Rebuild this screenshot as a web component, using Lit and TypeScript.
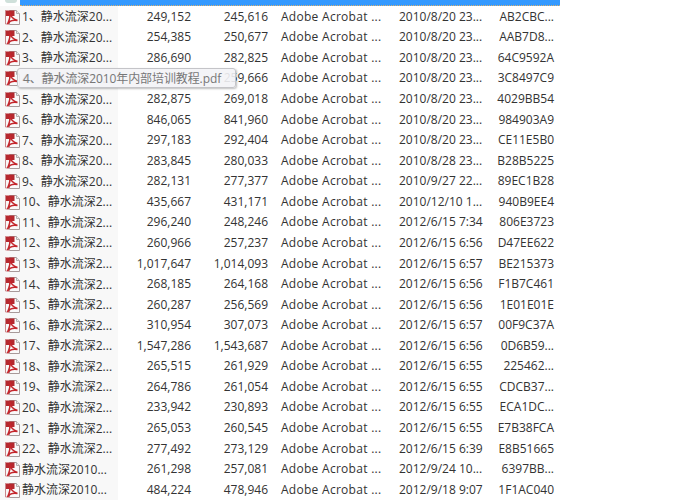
import { LitElement, html, css, svg } from "lit";
import { customElement } from "lit/decorators.js";

const rows: string[][] = [
["1、静水流深20...","249,152","245,616","2010/8/20 23...","AB2CBC..."],
["2、静水流深20...","254,385","250,677","2010/8/20 23...","AAB7D8..."],
["3、静水流深20...","286,690","282,825","2010/8/20 23...","64C9592A"],
["4、静水流深20...","","259,666","2010/8/20 23...","3C8497C9"],
["5、静水流深20...","282,875","269,018","2010/8/20 23...","4029BB54"],
["6、静水流深20...","846,065","841,960","2010/8/20 23...","984903A9"],
["7、静水流深20...","297,183","292,404","2010/8/20 23...","CE11E5B0"],
["8、静水流深20...","283,845","280,033","2010/8/28 23...","B28B5225"],
["9、静水流深20...","282,131","277,377","2010/9/27 22...","89EC1B28"],
["10、静水流深2...","435,667","431,171","2010/12/10 1...","940B9EE4"],
["11、静水流深2...","296,240","248,246","2012/6/15 7:34","806E3723"],
["12、静水流深2...","260,966","257,237","2012/6/15 6:56","D47EE622"],
["13、静水流深2...","1,017,647","1,014,093","2012/6/15 6:57","BE215373"],
["14、静水流深2...","268,185","264,168","2012/6/15 6:56","F1B7C461"],
["15、静水流深2...","260,287","256,569","2012/6/15 6:56","1E01E01E"],
["16、静水流深2...","310,954","307,073","2012/6/15 6:57","00F9C37A"],
["17、静水流深2...","1,547,286","1,543,687","2012/6/15 6:56","0D6B59..."],
["18、静水流深2...","265,515","261,929","2012/6/15 6:55","225462..."],
["19、静水流深2...","264,786","261,054","2012/6/15 6:55","CDCB37..."],
["20、静水流深2...","233,942","230,893","2012/6/15 6:55","ECA1DC..."],
["21、静水流深2...","265,053","260,545","2012/6/15 6:55","E7B38FCA"],
["22、静水流深2...","277,492","273,129","2012/6/15 6:39","E8B51665"],
["静水流深2010...","261,298","257,081","2012/9/24 10...","6397BB..."],
["静水流深2010...","484,224","478,946","2012/9/18 9:07","1F1AC040"],
];

const icon = svg`<svg class="ic" width="17" height="17" viewBox="0 -1 17 17"><path d="M5.500 1.500h7l3 3v11h-10z" fill="#fafafa" stroke="#a89a9a"/><path d="M12.500 1.500v3h3" fill="#ececec" stroke="#b5b0b0"/><path d="M1 1.500h9.500v5.500H1z" fill="#b5282e"/><path d="M1.500 2v13h4" fill="none" stroke="#c9868a"/><path d="M6 3c.2 3.500 1.500 6.500 7.500 8.500-4-.8-7.500-.3-10 3.500 2-4 3-7.500 2.500-12" fill="none" stroke="#c4262c" stroke-width="1.500"/></svg>`;

@customElement("app-root")
export class AppRoot extends LitElement {
  static styles = css`
    :host { display: block; width: 700px; height: 504px; overflow: hidden; background: #fff;
      font-family: "Open Sans", "Noto Sans CJK SC", sans-serif; font-size: 12px; color: #333; position: relative; }
    .top { height: 6px; width: 560px; display: flex; }
    .top i { display: block; width: 20px; }
    .top i::before { content: ""; display: block; width: 12px; height: 3px; margin-left: 5px; background: #cfe0da; border-radius: 0 0 6px 6px; }
    .top b { display: block; flex: 1; box-sizing: border-box; background: #3399ff; border-bottom: 1px dotted #d8b070; }
    .list { width: 560px; display: flex; flex-direction: column; }
    .row { display: grid; grid-template-columns: 118px 73px 77px 131px 86px 75px; height: 20.57px; align-items: center; white-space: nowrap; }
    .name { display: flex; align-items: center; background: #f8f8f8; height: 100%; padding-left: 4px; gap: 1px; }
    .ic { flex: none; }
    .num { text-align: right; }
    .type { padding-left: 13px; letter-spacing: .28px; }
    .crc { text-align: right; padding-right: 6px; }
    .tip { position: absolute; left: 17px; top: 68px; height: 20px; width: 219px; box-sizing: border-box; background: rgba(243,243,246,.9); border: 1px solid #c4c4c8; border-radius: 3px;
      color: #777; display: flex; align-items: center; padding-left: 5px; letter-spacing: -.1px; box-shadow: 1px 1px 2px rgba(0,0,0,.25); }
  `;
  render() {
    return html`<div class="top"><i></i><b></b></div><div class="list">
      ${rows.map(r => html`<div class="row">
        <div class="name">${icon}<span>${r[0]}</span></div>
        <div class="num">${r[1]}</div><div class="num">${r[2]}</div>
        <div class="type">Adobe Acrobat ...</div>
        <div class="date">${r[3]}</div>
        <div class="crc">${r[4]}</div>
      </div>`)}
    </div><div class="tip">4、静水流深2010年内部培训教程.pdf</div>`;
  }
}
